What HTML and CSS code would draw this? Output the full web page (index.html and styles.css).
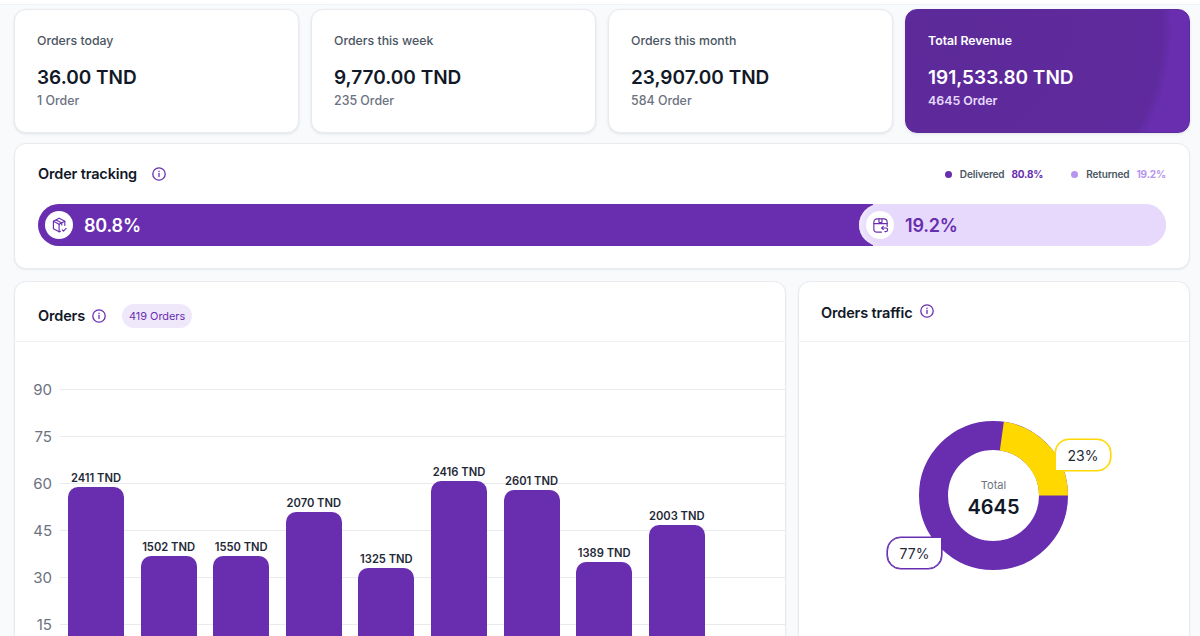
FILE: index.html
```html
<!DOCTYPE html>
<html lang="en">
<head>
<meta charset="utf-8">
<title>Dashboard</title>
<link rel="stylesheet" href="styles.css">
</head>
<body>
<div class="topbar"></div>
<main class="page">
  <section class="stats">
    <article class="stat"><h3>Orders today</h3><p class="amount">36.00 TND</p><p class="sub">1 Order</p></article>
    <article class="stat"><h3>Orders this week</h3><p class="amount">9,770.00 TND</p><p class="sub">235 Order</p></article>
    <article class="stat"><h3>Orders this month</h3><p class="amount">23,907.00 TND</p><p class="sub">584 Order</p></article>
    <article class="stat revenue"><h3>Total Revenue</h3><p class="amount">191,533.80 TND</p><p class="sub">4645 Order</p></article>
  </section>

  <section class="card tracking">
    <div class="tracking-head">
      <div class="title-group wide">
        <h2>Order tracking</h2>
        <svg class="info" viewBox="0 0 16 16"><circle cx="8" cy="8" r="6.2"/><path d="M8 7.4v3.2"/><path d="M8 5.2v.3"/></svg>
      </div>
      <div class="legend">
        <span class="dot dark"></span><span class="legend-name">Delivered</span><b class="legend-val dark-text">80.8%</b>
        <span class="dot light"></span><span class="legend-name">Returned</span><b class="legend-val light-text">19.2%</b>
      </div>
    </div>
    <div class="track">
      <div class="seg delivered">
        <span class="badge">
          <svg viewBox="0 0 20 20"><path d="M9.6 2.4 3.6 5.6v7.8l6 3.3 1.4-.7"/><path d="M9.6 2.4l6 3.2v4.4"/><path d="M3.6 5.6l6 3.2 6-3.2"/><path d="M9.6 8.8v7.9"/><path d="M6.4 4.1l6 3.2v2.3"/><path d="M12.8 14.6l1.4 1.4 2.8-2.9"/></svg>
        </span>
        <span>80.8%</span>
      </div>
      <div class="seg returned">
        <span class="badge">
          <svg viewBox="0 0 20 20"><path d="M17 11V6.4A3.4 3.4 0 0 0 13.6 3H6.4A3.4 3.4 0 0 0 3 6.4v7.2A3.4 3.4 0 0 0 6.4 17H11"/><path d="M3 8h14"/><path d="M8.4 3.2V6.2a.8.8 0 0 0 .8.8h1.6a.8.8 0 0 0 .8-.8V3.2"/><path d="M11.4 12.6h4.2a1.9 1.9 0 0 1 0 3.8h-1"/><path d="M13 11l-1.7 1.6 1.7 1.6"/></svg>
        </span>
        <span>19.2%</span>
      </div>
    </div>
  </section>

  <section class="bottom">
    <article class="card panel orders">
      <header class="panel-head">
        <div class="title-group">
          <h2>Orders</h2>
          <svg class="info" viewBox="0 0 16 16"><circle cx="8" cy="8" r="6.2"/><path d="M8 7.4v3.2"/><path d="M8 5.2v.3"/></svg>
        </div>
        <span class="pill">419 Orders</span>
      </header>
      <div class="chart">
        <div class="row"><span>90</span><i></i></div>
        <div class="row"><span>75</span><i></i></div>
        <div class="row"><span>60</span><i></i></div>
        <div class="row"><span>45</span><i></i></div>
        <div class="row"><span>30</span><i></i></div>
        <div class="row"><span>15</span><i></i></div>
        <div class="bars">
          <div class="col"><span>2411 TND</span><div class="bar" style="height:185px"></div></div>
          <div class="col"><span>1502 TND</span><div class="bar" style="height:116px"></div></div>
          <div class="col"><span>1550 TND</span><div class="bar" style="height:116px"></div></div>
          <div class="col"><span>2070 TND</span><div class="bar" style="height:160px"></div></div>
          <div class="col"><span>1325 TND</span><div class="bar" style="height:104px"></div></div>
          <div class="col"><span>2416 TND</span><div class="bar" style="height:191px"></div></div>
          <div class="col"><span>2601 TND</span><div class="bar" style="height:182px"></div></div>
          <div class="col"><span>1389 TND</span><div class="bar" style="height:110px"></div></div>
          <div class="col"><span>2003 TND</span><div class="bar" style="height:147px"></div></div>
        </div>
      </div>
    </article>

    <article class="card panel traffic">
      <header class="panel-head traffic-head">
        <h2>Orders traffic</h2>
        <svg class="info" viewBox="0 0 16 16"><circle cx="8" cy="8" r="6.2"/><path d="M8 7.4v3.2"/><path d="M8 5.2v.3"/></svg>
      </header>
      <div class="donut-area">
        <div class="donut">
          <svg viewBox="0 0 149 149">
            <circle class="ring-base" cx="74.5" cy="74.5" r="60"/>
            <path class="ring-part" d="M82.85 15.08A60 60 0 0 1 134.5 74.5"/>
          </svg>
          <div class="donut-center"><span>Total</span><b>4645</b></div>
          <span class="callout yellow">23%</span>
          <span class="callout purple">77%</span>
        </div>
      </div>
    </article>
  </section>
</main>
</body>
</html>
```

FILE: styles.css
```css
* { box-sizing: border-box; }
html, body { margin: 0; height: 636px; overflow: hidden; }
body {
  background: #f8fafc;
  font-family: Inter, "Liberation Sans", sans-serif;
  color: #111827;
}
h2, h3, p { margin: 0; }
.topbar { height: 5px; background: #fff; border-bottom: 1px solid #f1f2f5; }
.page { height: 631px; overflow: hidden; padding: 4px 10px 0 14px; display: flex; flex-direction: column; gap: 10px; }
.page > section { flex-shrink: 0; }

.stats { display: grid; grid-template-columns: repeat(4, 285px); gap: 12px; }
.stat {
  height: 124px;
  padding: 23px 22px 0;
  background: #fff;
  border: 1px solid #e8eaee;
  border-radius: 12px;
  box-shadow: 0 1px 3px rgba(16, 24, 40, .1);
}
.stat h3 { font-size: 12.3px; line-height: 15px; font-weight: 500; color: #4b5563; }
.stat .amount { margin-top: 18px; font-size: 19px; line-height: 24px; font-weight: 600; color: #111827; }
.stat .sub { margin-top: 3px; font-size: 12.4px; line-height: 16px; font-weight: 500; color: #6b7280; }
.revenue {
  border-color: #5f2a9f;
  background: radial-gradient(circle at 50px 20px, #5d2a9a 0, #5f2a9d 206px, #682eaf 216px);
}
.revenue h3, .revenue .amount { color: #fff; font-weight: 600; }
.revenue .sub { color: #e6d9fb; font-weight: 600; }

.card {
  background: #fff;
  border: 1px solid #e8eaee;
  border-radius: 12px;
  box-shadow: 0 1px 2px rgba(16, 24, 40, .07);
}
.tracking { height: 126px; padding: 16px 23px 0; }
.tracking-head { display: flex; justify-content: space-between; align-items: center; height: 28px; }
.title-group { display: flex; align-items: center; gap: 6px; }
.title-group.wide { gap: 14px; }
h2 { font-size: 14.5px; line-height: 20px; font-weight: 600; color: #111827; letter-spacing: -.15px; }
.info { width: 16px; height: 16px; fill: none; stroke: #682eaf; stroke-width: 1.3; stroke-linecap: round; }

.legend { display: flex; align-items: center; font-size: 10px; font-weight: 600; color: #4b5563; letter-spacing: -.15px; }
.dot { width: 7px; height: 7px; border-radius: 50%; margin-right: 8px; }
.dot.dark { background: #682eaf; }
.dot.light { background: #b794ee; margin-left: 28px; }
.legend-val { margin-left: 7px; font-weight: 700; }
.dark-text { color: #682eaf; }
.light-text { color: #b794ee; }

.track {
  display: flex;
  height: 42px;
  margin-top: 16px;
  border-radius: 21px;
  background: #e6d9fb;
  font-size: 18px;
  font-weight: 600;
  letter-spacing: -.2px;
}
.seg { display: flex; align-items: center; gap: 11px; height: 100%; border-radius: 21px; }
.delivered { width: 835px; padding-left: 7px; background: #682eaf; color: #fff; border-radius: 21px 0 0 21px; }
.returned { flex: 1; margin-left: -14px; padding-left: 7px; background: #e6d9fb; color: #682eaf; box-shadow: inset 8px 0 6px -4px #f1e9fd; }
.badge { display: flex; align-items: center; justify-content: center; width: 28px; height: 28px; border-radius: 50%; background: #fff; }
.badge svg { width: 19px; height: 19px; fill: none; stroke: #682eaf; stroke-width: 1.2; stroke-linecap: round; stroke-linejoin: round; }

.bottom { display: grid; grid-template-columns: 772px 392px; gap: 12px; margin-top: 2px; }
.panel { height: 420px; overflow: hidden; }
.panel-head { display: flex; align-items: center; gap: 15px; height: 60px; padding: 8px 23px 0; border-bottom: 1px solid #f1f2f5; }
.traffic-head { gap: 6px; padding: 2px 22px 0; }
.traffic-head .info { margin-bottom: 4px; }
.pill { height: 24px; padding: 0 7px; border-radius: 12px; background: #efe8fb; color: #682eaf; font-size: 10.9px; line-height: 24px; }

.chart { position: relative; padding-top: 24px; }
.row { display: flex; align-items: center; height: 47px; }
.row span { width: 37px; text-align: right; font-size: 15px; color: #6b7280; }
.row i { flex: 1; height: 1px; margin-left: 8px; background: #e8eaee; }
.bars { position: absolute; left: 53px; top: 0; height: 330px; display: flex; align-items: flex-end; gap: 16.6px; }
.col { width: 56px; display: flex; flex-direction: column; align-items: center; }
.col span { font-size: 11.2px; line-height: 14px; font-weight: 600; color: #1f2937; white-space: nowrap; margin-bottom: 2px; }
.bar { width: 56px; background: #682eaf; border-radius: 10px 10px 0 0; }

.donut-area { display: flex; justify-content: center; padding: 79px 1px 0 0; }
.donut { position: relative; width: 149px; height: 149px; }
.donut svg { display: block; width: 149px; height: 149px; fill: none; stroke-width: 29; }
.ring-base { stroke: #682eaf; }
.ring-part { stroke: #ffd800; }
.donut-center { position: absolute; inset: 0; display: flex; flex-direction: column; align-items: center; justify-content: center; padding-top: 6px; }
.donut-center span { font-size: 11px; line-height: 14px; margin-bottom: 2px; color: #6b7280; }
.donut-center b { font-size: 20px; line-height: 26px; font-weight: 600; color: #111827; }
.callout {
  position: absolute;
  display: flex; align-items: center; justify-content: center;
  height: 32px;
  background: #fff;
  font-size: 14px;
  color: #1f2937;
  border: 1px solid;
}
.callout.yellow { left: 136px; top: 18px; width: 56px; border-color: #ffd800; box-shadow: 0 0 0 .6px #ffd800; border-radius: 14px 14px 14px 0; }
.callout.purple { left: -32px; top: 116px; width: 55px; border-color: #682eaf; box-shadow: 0 0 0 .6px #682eaf; border-radius: 14px 0 14px 14px; }
```
